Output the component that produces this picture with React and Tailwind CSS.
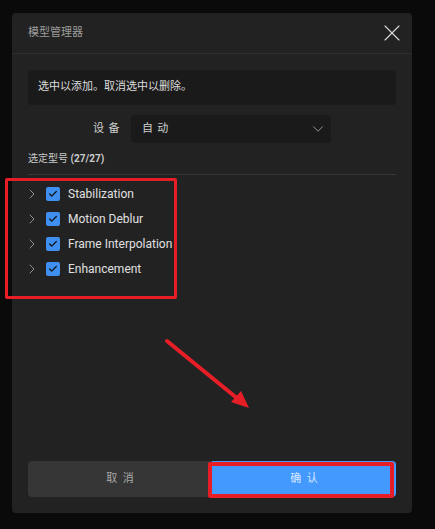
import React from 'react'
import { X, ChevronDown, ChevronRight, Check } from 'lucide-react'

const models = ['Stabilization', 'Motion Deblur', 'Frame Interpolation', 'Enhancement']

const font = { fontFamily: 'Roboto, "Noto Sans CJK SC", sans-serif' }

function ModelRow({ name }) {
  return (
    <div className="flex items-center h-[25px]">
      <ChevronRight size={16} strokeWidth={1.4} className="text-[#9a9a9a] -ml-[4px]" />
      <div className="ml-[6px] w-[14px] h-[14px] rounded-[2px] bg-[#3f8ff0] flex items-center justify-center">
        <Check size={10} strokeWidth={3} className="text-[#111]" />
      </div>
      <span className="ml-[8px] text-[12px] text-[#e0e0e0]">{name}</span>
    </div>
  )
}

export default function App() {
  return (
    <div className="relative w-[435px] h-[529px] bg-[#0a0a0a] pt-[13px] pl-[12px]" style={font}>
      <div className="w-[400px] h-[500px] bg-[#222222] rounded-[4px] flex flex-col">
        {/* header */}
        <div className="h-[41px] border-b border-[#2e2e2e] flex items-center justify-between pl-[16px] pr-[6px]">
          <span className="text-[11px] text-[#9c9c9c]">模型管理器</span>
          <X size={28} strokeWidth={1} className="text-[#d4d4d4]" />
        </div>

        <div className="flex-1 flex flex-col px-[16px] pb-[16px]">
          <div className="mt-[16px] h-[35px] rounded-[4px] bg-[#1a1a1a] flex items-center px-[10px]">
            <span className="text-[11px] text-[#dddddd]">选中以添加。取消选中以删除。</span>
          </div>

          <div className="mt-[10px] flex items-center justify-center gap-[7px]">
            <span className="text-[11px] text-[#cfcfcf] tracking-[0.4em]">设备</span>
            <div className="w-[200px] h-[28px] rounded-[4px] bg-[#1a1a1a] flex items-center justify-between pl-[11px] pr-[4px]">
              <span className="text-[11px] text-[#cfcfcf] tracking-[0.4em]">自动</span>
              <ChevronDown size={18} strokeWidth={1.2} className="text-[#a0a0a0]" />
            </div>
          </div>

          <div className="mt-[9px] text-[10px] text-[#cccccc] leading-[14px]">
            选定型号 <span className="font-bold">(27/27)</span>
          </div>
          <div className="mt-[8px] h-px bg-[#383838]" />

          <div className="mt-[6px] flex flex-col">
            {models.map((m) => (
              <ModelRow key={m} name={m} />
            ))}
          </div>

          <div className="mt-auto flex h-[36px]">
            <button className="flex-1 bg-[#363636] rounded-l-[4px] text-[11px] text-[#a8a8a8] tracking-[0.5em] pl-[0.5em]">取消</button>
            <button className="flex-1 bg-[#4499ff] rounded-r-[4px] text-[11px] text-[#d6e8ff] tracking-[0.5em] pl-[0.5em]">确认</button>
          </div>
        </div>
      </div>

      {/* annotations */}
      <div className="absolute left-[5px] top-[178px] w-[172px] h-[121px] border-[3px] border-[#e81e27] rounded-[2px]" />
      <div className="absolute left-[208px] top-[462px] w-[186px] h-[36px] border-[4px] border-[#e81e27] rounded-[2px]" />
      <svg className="absolute left-0 top-0" width="435" height="529" viewBox="0 0 435 529">
        <line x1="167" y1="341" x2="238" y2="399" stroke="#e81e27" strokeWidth="4" strokeLinecap="round" />
        <polygon points="249,408 231,402 241,391" fill="#e81e27" />
      </svg>
    </div>
  )
}
